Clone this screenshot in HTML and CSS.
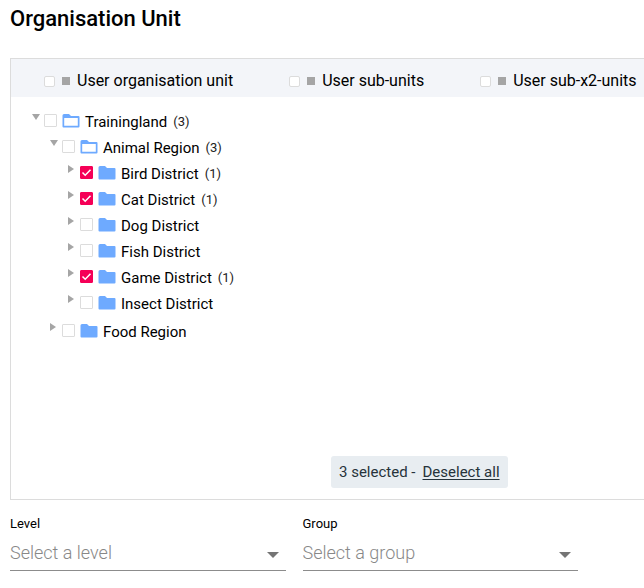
FILE: index.html
```html
<!DOCTYPE html>
<html lang="en">
<head>
<meta charset="utf-8">
<title>Organisation Unit</title>
<link rel="stylesheet" href="styles.css">
</head>
<body>
<svg class="symbols" aria-hidden="true">
  <symbol id="folder" viewBox="0 0 18 14"><path d="M2 0h5l2 2h7.500q1 0 1 1v9.500q0 1-1 1H1.500q-1 0-1-1v-11Q.5 0 2 0z" fill="#6eaaff"/></symbol>
  <symbol id="folder-open" viewBox="0 0 18 14"><path d="M2 0h5l2 2h7.500q1 0 1 1v9.500q0 1-1 1H1.500q-1 0-1-1v-11Q.5 0 2 0zM2.200 4v7.800h13.600V4z" fill="#6eaaff" fill-rule="evenodd"/></symbol>
</svg>
<main class="page">
  <h1 class="title">Organisation Unit</h1>
  <section class="panel">
    <div class="user-units">
      <label class="user-unit"><input class="check small" type="checkbox"><span class="square"></span>User organisation unit</label>
      <label class="user-unit"><input class="check small" type="checkbox"><span class="square"></span>User sub-units</label>
      <label class="user-unit"><input class="check small" type="checkbox"><span class="square"></span>User sub-x2-units</label>
    </div>
    <ul class="tree">
      <li>
        <div class="node"><button class="toggle open" aria-label="Collapse"></button><label class="unit"><input class="check" type="checkbox"><svg class="folder"><use href="#folder-open"/></svg>Trainingland<span class="count">(3)</span></label></div>
        <ul class="branch">
          <li>
            <div class="node"><button class="toggle open" aria-label="Collapse"></button><label class="unit"><input class="check" type="checkbox"><svg class="folder"><use href="#folder-open"/></svg>Animal Region<span class="count">(3)</span></label></div>
            <ul class="branch districts">
              <li class="node"><button class="toggle" aria-label="Expand"></button><label class="unit"><input class="check" type="checkbox" checked><svg class="folder"><use href="#folder"/></svg>Bird District<span class="count">(1)</span></label></li>
              <li class="node"><button class="toggle" aria-label="Expand"></button><label class="unit"><input class="check" type="checkbox" checked><svg class="folder"><use href="#folder"/></svg>Cat District<span class="count">(1)</span></label></li>
              <li class="node"><button class="toggle" aria-label="Expand"></button><label class="unit"><input class="check" type="checkbox"><svg class="folder"><use href="#folder"/></svg>Dog District</label></li>
              <li class="node"><button class="toggle" aria-label="Expand"></button><label class="unit"><input class="check" type="checkbox"><svg class="folder"><use href="#folder"/></svg>Fish District</label></li>
              <li class="node"><button class="toggle" aria-label="Expand"></button><label class="unit"><input class="check" type="checkbox" checked><svg class="folder"><use href="#folder"/></svg>Game District<span class="count">(1)</span></label></li>
              <li class="node"><button class="toggle" aria-label="Expand"></button><label class="unit"><input class="check" type="checkbox"><svg class="folder"><use href="#folder"/></svg>Insect District</label></li>
            </ul>
          </li>
          <li class="node"><button class="toggle" aria-label="Expand"></button><label class="unit"><input class="check" type="checkbox"><svg class="folder"><use href="#folder"/></svg>Food Region</label></li>
        </ul>
      </li>
    </ul>
    <div class="summary">
      <div class="selected"><span>3 selected -</span><button class="deselect">Deselect all</button></div>
    </div>
  </section>
  <div class="filters">
    <div class="field">
      <label class="caption" for="level">Level</label>
      <div class="control">
        <select class="select" id="level"><option>Select a level</option></select>
        <svg class="arrow" viewBox="0 0 12 6"><path d="M0 0h12L6 6z"/></svg>
      </div>
    </div>
    <div class="field">
      <label class="caption" for="group">Group</label>
      <div class="control">
        <select class="select" id="group"><option>Select a group</option></select>
        <svg class="arrow" viewBox="0 0 12 6"><path d="M0 0h12L6 6z"/></svg>
      </div>
    </div>
  </div>
</main>
</body>
</html>
```
FILE: styles.css
```css
* { box-sizing: border-box; }
body {
  margin: 0;
  background: #fff;
  color: #000;
  font: 15px/26px Roboto, sans-serif;
}
button {
  padding: 0;
  border: 0;
  background: none;
  color: inherit;
  font: inherit;
  cursor: pointer;
}
ul { margin: 0; padding: 0; list-style: none; }
.symbols { display: none; }
.page { padding: 5px 0 0 10px; }
.title {
  margin: 0 0 25px;
  font-size: 22px;
  line-height: 28px;
  font-weight: 500;
}
.panel {
  display: flex;
  flex-direction: column;
  min-height: 442px;
  border: 1px solid #dcdcdc;
  border-right: 0;
}
.user-units {
  display: flex;
  gap: 56px;
  padding: 6px 0 0 33px;
  height: 38px;
  background: #f3f5f9;
  font-size: 16px;
  line-height: 32px;
  white-space: nowrap;
}
.user-unit { display: flex; align-items: center; }
.square { width: 8px; height: 8px; margin: 0 7px; background: #a5a5a5; }
.check {
  flex: none;
  appearance: none;
  width: 13px;
  height: 13px;
  margin: 0;
  border: 1px solid #dcdcdc;
  border-radius: 1px;
  background: #fff;
}
.check.small { width: 11px; height: 11px; border-radius: 2px; }
.check:checked {
  border-color: #f50057;
  background: #f50057 url("data:image/svg+xml,%3Csvg xmlns='http://www.w3.org/2000/svg' viewBox='0 0 11 11'%3E%3Cpath d='M1.500 5.500l2.700 2.700L9.500 2.800' fill='none' stroke='white' stroke-width='1.500'/%3E%3C/svg%3E");
}
.tree { flex: 1; padding: 12px 0 0 21px; }
.branch { padding-left: 18px; }
.districts { padding-bottom: 2px; }
.node { display: flex; height: 26px; }
.toggle {
  width: 12px;
  height: 16px;
  display: flex;
  align-items: center;
}
.toggle::before {
  content: "";
  border: solid transparent;
  border-width: 4px 0 4px 6px;
  border-left-color: #a5a5a5;
}
.toggle.open::before {
  border-width: 6px 4px 0;
  border-color: #a5a5a5 transparent transparent;
}
.unit { display: flex; align-items: center; white-space: nowrap; }
.unit .check { margin-bottom: 3px; }
.folder { width: 18px; height: 14px; margin: 0 5px 3px; }
.count { margin-left: 6px; font-size: 13px; color: #222; }
.summary { display: flex; padding: 0 0 11px 320px; }
.selected {
  display: flex;
  gap: 7px;
  padding: 3px 8px;
  border-radius: 3px;
  background: #e8edf1;
  color: #26333b;
  white-space: nowrap;
}
.deselect { text-decoration: underline; text-underline-offset: 2px; }
.filters {
  display: grid;
  grid-template-columns: 1fr 1fr;
  gap: 17px;
  padding: 14px 66px 0 0;
}
.caption { display: block; font-size: 13px; line-height: 20px; }
.control { position: relative; }
.select {
  display: block;
  width: 100%;
  height: 37px;
  padding: 0;
  border: 0;
  border-bottom: 1px solid #8c8c8c;
  border-radius: 0;
  appearance: none;
  background: none;
  color: #888;
  font: 300 18px Roboto, sans-serif;
}
.arrow {
  position: absolute;
  right: 7px;
  top: 18px;
  width: 12px;
  height: 6px;
  fill: #757575;
  pointer-events: none;
}
```
